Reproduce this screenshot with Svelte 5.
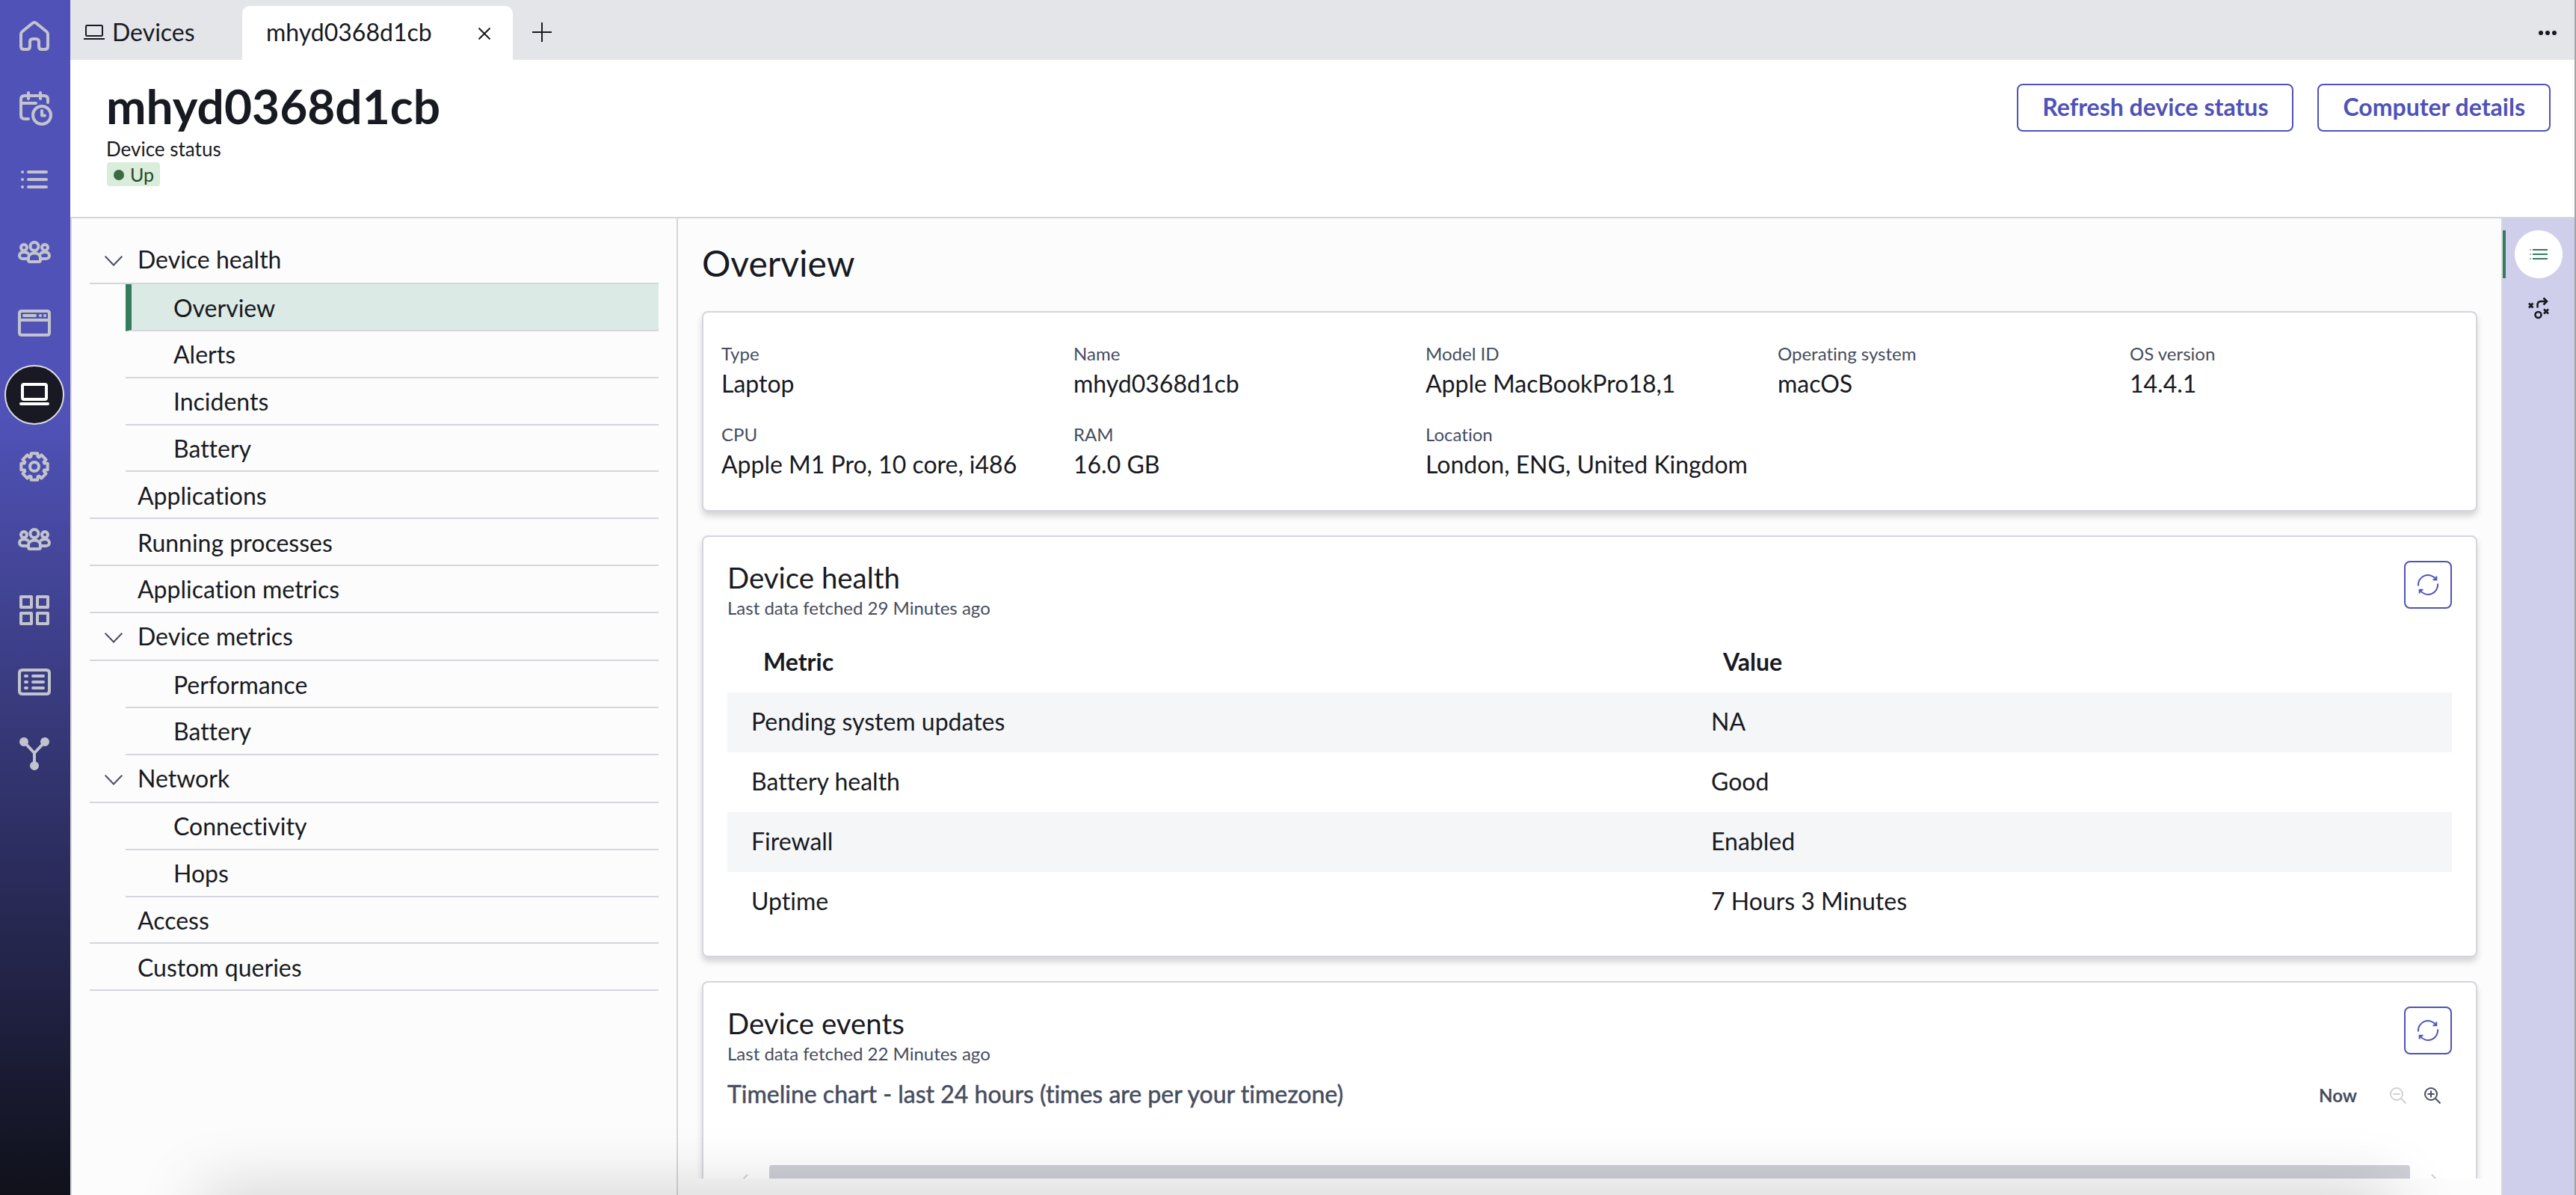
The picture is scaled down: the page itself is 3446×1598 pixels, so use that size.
<script lang="ts">
    type NavItem = { label: string; children?: string[] };

    let activeTool = $state("devices");
    let activeSection = $state("Overview");

    // Outline of the eight-toothed gear, centred on 22,24
    const gearPath =
        Array.from({ length: 8 }, (_, i) => {
            const a = (i * Math.PI) / 4 - Math.PI / 2;
            return [
                [14, -0.33],
                [18.2, -0.24],
                [18.2, 0.24],
                [14, 0.33],
            ].map(([r, d]) => `${(22 + r * Math.cos(a + d)).toFixed(2)} ${(24 + r * Math.sin(a + d)).toFixed(2)}`);
        })
            .flat()
            .map((p, i) => (i ? "L" : "M") + p)
            .join("") + "Z";

    const peoplePath =
        "M27.5 17.5a5.5 5.5 0 1 1-11 0a5.5 5.5 0 1 1 11 0Z" +
        "M14 36V33.500C14 29 17.500 26.500 22 26.500S30 29 30 33.500V36Q30 38 28 38H16Q14 38 14 36Z" +
        "M12 19a4 4 0 1 1-8 0a4 4 0 1 1 8 0Z M40 19a4 4 0 1 1-8 0a4 4 0 1 1 8 0Z" +
        "M12 34H7C3.500 34 2 32 2 30C2 27 4.500 25 8 25C10 25 11.500 25.500 13 26.500" +
        "M32 34H37C40.500 34 42 32 42 30C42 27 39.500 25 36 25C34 25 32.500 25.500 31 26.500";

    const tools = [
        {
            id: "home",
            path: "M4 22V38Q4 42 8 42H12Q16 42 16 38V32Q16 28 20 28H24Q28 28 28 32V38Q28 42 32 42H36Q40 42 40 38V22Q40 19.500 38 18L24.500 7Q22 5 19.500 7L6 18Q4 19.500 4 22Z",
        },
        {
            id: "schedule",
            path: "M14 4V12M30 4V12M14 39H9Q4 39 4 34V13Q4 8 9 8H35Q40 8 40 13V17M5 18H24M44 34a12 12 0 1 1-24 0a12 12 0 1 1 24 0ZM32 28V34.500H36",
        },
        { id: "list", path: "M6 14h.01M6 24h.01M6 34h.01M14 14H38M14 24H38M14 34H38" },
        { id: "teams", path: peoplePath },
        {
            id: "window",
            path: "M5 8H39Q42 8 42 11V37Q42 40 39 40H5Q2 40 2 37V11Q2 8 5 8ZM3 20H41M8 14H23M30 14h.01M36 14h.01",
        },
        { id: "devices", path: "M8 10H36Q38 10 38 12V28Q38 30 36 30H8Q6 30 6 28V12Q6 10 8 10ZM4 36H40" },
        { id: "settings", path: gearPath + "M28 24a6 6 0 1 1-12 0a6 6 0 1 1 12 0Z" },
        { id: "users", path: peoplePath },
        { id: "apps", path: "M4 6H18V20H4ZM26 6H40V20H26ZM4 28H18V42H4ZM26 28H40V42H26Z" },
        {
            id: "records",
            path: "M6 8H38Q42 8 42 12V36Q42 40 38 40H6Q2 40 2 36V12Q2 8 6 8ZM10 16h2M10 24h2M10 32h2M20 16H34M20 24H34M20 32H34",
        },
        {
            id: "flow",
            path: "M8 8L22 23L36 8M22 23V40M12 8a4 4 0 1 1-8 0a4 4 0 1 1 8 0ZM40 8a4 4 0 1 1-8 0a4 4 0 1 1 8 0ZM26 40a4 4 0 1 1-8 0a4 4 0 1 1 8 0ZM8 8h.01M36 8h.01M22 40h.01",
        },
    ];

    const nav: NavItem[] = [
        { label: "Device health", children: ["Overview", "Alerts", "Incidents", "Battery"] },
        { label: "Applications" },
        { label: "Running processes" },
        { label: "Application metrics" },
        { label: "Device metrics", children: ["Performance", "Battery"] },
        { label: "Network", children: ["Connectivity", "Hops"] },
        { label: "Access" },
        { label: "Custom queries" },
    ];

    const details = [
        { label: "Type", value: "Laptop" },
        { label: "Name", value: "mhyd0368d1cb" },
        { label: "Model ID", value: "Apple MacBookPro18,1" },
        { label: "Operating system", value: "macOS" },
        { label: "OS version", value: "14.4.1" },
        { label: "CPU", value: "Apple M1 Pro, 10 core, i486" },
        { label: "RAM", value: "16.0 GB" },
        { label: "Location", value: "London, ENG, United Kingdom" },
    ];

    const metrics = [
        ["Pending system updates", "NA"],
        ["Battery health", "Good"],
        ["Firewall", "Enabled"],
        ["Uptime", "7 Hours 3 Minutes"],
    ];
</script>

{#snippet refreshButton()}
    <button class="refresh" aria-label="Refresh">
        <svg width="28" height="28" viewBox="0 0 28 28">
            <path d="M1 15.500A13 13 0 0 1 24.500 6.500M25.300 2.500V7.300H20.500" />
            <path d="M27 12.500A13 13 0 0 1 3.500 21.500M2.700 25.500V20.700H7.500" />
        </svg>
    </button>
{/snippet}

<div class="app">
    <aside class="toolbar">
        {#each tools as tool}
            <button
                class="tool"
                class:active={activeTool === tool.id}
                aria-label={tool.id}
                onclick={() => (activeTool = tool.id)}
            >
                <svg width="44" height="48" viewBox="0 0 44 48"><path d={tool.path} /></svg>
            </button>
        {/each}
    </aside>

    <div class="workspace">
        <div class="tabs">
            <div class="tab-home">
                <svg width="28" height="22" viewBox="0 0 28 22">
                    <rect x="3" y="2" width="22" height="14" rx="1.500" />
                    <path d="M0 20H28" />
                </svg>
                <span>Devices</span>
            </div>
            <div class="tab">
                <span>mhyd0368d1cb</span>
                <svg class="close" width="16" height="16" viewBox="0 0 16 16"><path d="M.5 .5L15.500 15.500M15.500 .5L.5 15.500" /></svg>
            </div>
            <svg class="add" width="26" height="26" viewBox="0 0 26 26"><path d="M13 0V26M0 13H26" /></svg>
            <svg class="more" width="24" height="6" viewBox="0 0 24 6">
                <circle cx="3" cy="3" r="3" />
                <circle cx="12" cy="3" r="3" />
                <circle cx="21" cy="3" r="3" />
            </svg>
        </div>

        <header>
            <div>
                <h1>mhyd0368d1cb</h1>
                <div class="status-label">Device status</div>
                <div class="badge"><i></i>Up</div>
            </div>
            <div class="actions">
                <button>Refresh device status</button>
                <button>Computer details</button>
            </div>
        </header>

        <div class="body">
            <nav>
                {#each nav as item}
                    <div class="nav-item" class:parent={item.children}>
                        {#if item.children}
                            <svg width="24" height="14" viewBox="0 0 24 14"><path d="M.7 .7L12 12.500L23.300 .7" /></svg>
                        {/if}
                        <span>{item.label}</span>
                    </div>
                    {#each item.children ?? [] as child}
                        <div class="nav-child" class:selected={child === activeSection}>{child}</div>
                    {/each}
                {/each}
            </nav>

            <main>
                <h2>Overview</h2>

                <section class="card details">
                    {#each details as detail}
                        <div>
                            <div class="label">{detail.label}</div>
                            <div class="value">{detail.value}</div>
                        </div>
                    {/each}
                </section>

                <section class="card health">
                    <div class="card-head">
                        <div>
                            <h3>Device health</h3>
                            <p>Last data fetched 29 Minutes ago</p>
                        </div>
                        {@render refreshButton()}
                    </div>
                    <div class="table">
                        <div class="row head"><span>Metric</span><span>Value</span></div>
                        {#each metrics as [name, value]}
                            <div class="row"><span>{name}</span><span>{value}</span></div>
                        {/each}
                    </div>
                </section>

                <section class="card events">
                    <div class="card-head">
                        <div>
                            <h3>Device events</h3>
                            <p>Last data fetched 22 Minutes ago</p>
                        </div>
                        {@render refreshButton()}
                    </div>
                    <div class="chart-head">
                        <h4>Timeline chart - last 24 hours (times are per your timezone)</h4>
                        <b>Now</b>
                        <svg class="zoom disabled" width="23" height="23" viewBox="0 0 23 23">
                            <circle cx="9" cy="9" r="8" />
                            <path d="M15 15L21.500 21.500M4.500 9H13.500" />
                        </svg>
                        <svg class="zoom" width="23" height="23" viewBox="0 0 23 23">
                            <circle cx="9" cy="9" r="8" />
                            <path d="M15 15L21.500 21.500M4.500 9H13.500M9 4.500V13.500" />
                        </svg>
                    </div>
                    <div class="scroller">
                        <svg width="9" height="16" viewBox="0 0 9 16"><path d="M8 .5L1 8L8 15.500" /></svg>
                        <div class="thumb"></div>
                        <svg width="9" height="16" viewBox="0 0 9 16"><path d="M1 .5L8 8L1 15.500" /></svg>
                    </div>
                </section>
            </main>

            <aside class="rail">
                <button class="rail-item on" aria-label="Details">
                    <svg width="24" height="14" viewBox="0 0 24 14">
                        <path class="dots" d="M0 1H2M0 7H2M0 13H2" />
                        <path d="M4 1H24M4 7H24M4 13H24" />
                    </svg>
                </button>
                <button class="rail-item" aria-label="Playbook">
                    <svg width="32" height="32" viewBox="0 0 32 32">
                        <path d="M3 9.500L8.500 15.500M8.500 9.500L3 15.500M14.500 15.500V12Q14.500 7 19 7H26M22.500 2.500L27 7L22.500 11.500M23 17.500L29 23.500M29 17.500L23 23.500" />
                        <circle cx="15.500" cy="25" r="4" />
                    </svg>
                </button>
            </aside>
        </div>
    </div>
    <div class="dock-shadow"></div>
</div>

<style>
    :global(body) {
        margin: 0;
        overflow: hidden;
    }

    .app {
        --text: #181a22;
        --muted: #464d5e;
        --line: #d5d6dc;
        --brand: #4f52b8;
        --green: #347c5d;
        position: relative;
        display: flex;
        box-sizing: border-box;
        width: 3446px;
        height: 1598px;
        overflow: hidden;
        border-right: 2px solid #a3a4a6;
        font-family: Lato, sans-serif;
        font-size: 32px;
        font-variant-ligatures: none;
        line-height: 40px;
        color: var(--text);
        background: #fcfcfc;
    }

    button {
        padding: 0;
        border: 0;
        background: none;
        font: inherit;
        color: inherit;
    }

    svg {
        flex: none;
        fill: none;
        stroke: currentColor;
        stroke-width: 2;
    }

    h1, h2, h3, h4, p {
        margin: 0;
        font-weight: 400;
    }

    /* left toolbar */
    .toolbar {
        display: flex;
        flex-direction: column;
        align-items: center;
        gap: 16px;
        box-sizing: border-box;
        width: 94px;
        padding: 8px 2px 0 0;
        background: linear-gradient(#5052b7 0, #5052b7 35%, #10111a 100%);
        color: #c2c4cd;
    }

    .tool {
        display: flex;
        align-items: center;
        justify-content: center;
        flex: none;
        box-sizing: border-box;
        width: 80px;
        height: 80px;
        border-radius: 50%;
    }

    .tool.active {
        border: 2px solid #dcdde2;
        background: #181923;
        color: #fff;
    }

    .tool svg {
        overflow: visible;
        stroke-width: 4;
        stroke-linecap: round;
        stroke-linejoin: round;
    }

    .workspace {
        flex: 1;
        display: flex;
        flex-direction: column;
        min-width: 0;
    }

    /* tabs */
    .tabs {
        display: flex;
        align-items: flex-start;
        box-sizing: border-box;
        height: 80px;
        padding: 8px 24px 0 18px;
        background: #e4e5e9;
    }

    .tab-home {
        display: flex;
        align-items: center;
        gap: 10px;
        width: 212px;
        height: 70px;
    }

    .tab {
        display: flex;
        align-items: center;
        justify-content: space-between;
        box-sizing: border-box;
        width: 362px;
        height: 72px;
        padding: 0 30px 2px 32px;
        border-radius: 10px 10px 0 0;
        background: #fff;
    }

    .close {
        margin-top: 4px;
    }

    .add {
        margin: 22px 0 0 26px;
    }

    .more {
        margin: 33px 0 0 auto;
        fill: currentColor;
        stroke: none;
    }

    /* page header */
    header {
        display: flex;
        justify-content: space-between;
        box-sizing: border-box;
        height: 212px;
        padding: 25px 32px 0 48px;
        border-bottom: 2px solid var(--line);
        background: #fff;
    }

    h1 {
        font-size: 64px;
        line-height: 74px;
        font-weight: 700;
    }

    .status-label {
        margin-top: 4px;
        font-size: 26px;
        line-height: 32px;
    }

    .badge {
        display: flex;
        align-items: center;
        gap: 8px;
        box-sizing: border-box;
        width: 71px;
        height: 32px;
        margin: 2px 0 0 1px;
        padding-left: 9px;
        border-radius: 4px;
        background: #daecda;
        color: #24492a;
        font-size: 25px;
        line-height: 30px;
    }

    .badge i {
        width: 14px;
        height: 14px;
        margin-top: 1px;
        border-radius: 50%;
        background: #3d6b40;
    }

    .actions {
        display: flex;
        gap: 32px;
        padding-top: 7px;
    }

    .actions button {
        height: 64px;
        padding: 0 32px 2px;
        border: 2px solid var(--brand);
        border-radius: 8px;
        color: var(--brand);
        font-weight: 700;
    }

    .body {
        flex: 1;
        display: flex;
        min-height: 0;
    }

    /* section navigation */
    nav {
        box-sizing: border-box;
        width: 813px;
        padding: 24px 24px 0;
        border: solid var(--line);
        border-width: 0 2px;
    }

    .nav-item,
    .nav-child {
        display: flex;
        align-items: center;
        box-sizing: border-box;
        height: 62.8px;
        padding-top: 2px;
        border-bottom: 2px solid var(--line);
    }

    .nav-item {
        padding-left: 64px;
    }

    .nav-item.parent {
        gap: 20px;
        height: 64.3px;
        padding-top: 0;
        padding-left: 20px;
    }

    .nav-child {
        margin-left: 48px;
        padding-left: 64px;
    }

    .nav-child.selected {
        border-left: 8px solid var(--green);
        padding-left: 56px;
        background: #dbeae4;
    }

    .nav-item svg {
        margin-top: 4px;
        color: #4a4f5e;
    }

    /* content */
    main {
        flex: 1;
        height: 1284px;
        overflow: hidden;
        padding: 0 32px;
    }

    h2 {
        padding: 30px 0 34px;
        font-size: 48px;
        line-height: 60px;
    }

    .card {
        box-sizing: border-box;
        margin-bottom: 32px;
        border: 2px solid var(--line);
        border-radius: 8px;
        background: #fff;
        box-shadow: 0 6px 8px rgba(0, 0, 0, 0.16);
    }

    .details {
        display: grid;
        grid-template-columns: repeat(5, 471px);
        grid-auto-rows: 108px;
        height: 268px;
        padding: 39px 24px 0;
    }

    .label {
        color: var(--muted);
        font-size: 24px;
        line-height: 32px;
    }

    .value {
        margin-top: 4px;
        white-space: nowrap;
    }

    .health,
    .events {
        height: 564px;
        padding: 32px 32px 0;
    }

    .card-head {
        display: flex;
        justify-content: space-between;
        height: 96px;
    }

    h3 {
        font-size: 38.4px;
        line-height: 45px;
    }

    p {
        margin-top: 2px;
        color: var(--muted);
        font-size: 24px;
        line-height: 32px;
    }

    .refresh {
        display: flex;
        align-items: center;
        justify-content: center;
        box-sizing: border-box;
        width: 64px;
        height: 64px;
        border: 2px solid var(--brand);
        border-radius: 8px;
        color: var(--brand);
    }

    .row {
        display: grid;
        grid-template-columns: 1284px 1fr;
        align-items: center;
        box-sizing: border-box;
        height: 80px;
        padding: 0 0 2px 32px;
    }

    .row:nth-child(even) {
        background: #f5f6f8;
    }

    .row.head {
        padding-left: 48px;
        font-weight: 700;
    }

    .chart-head {
        display: flex;
        align-items: center;
        height: 44px;
        color: var(--muted);
    }

    h4 {
        flex: 1;
        margin-bottom: 2px;
        font-size: 32px;
        -webkit-text-stroke: 0.5px currentColor;
    }

    .chart-head b {
        margin: 2px 44px 0 0;
        font-size: 24px;
    }

    .zoom {
        margin: 2px 14px 0 0;
    }

    .zoom.disabled {
        margin-right: 23px;
        color: #cfd0d6;
    }

    .scroller {
        display: flex;
        gap: 28px;
        margin-top: 72px;
        padding: 0 19px;
        color: #cfd0d6;
    }

    .scroller svg {
        margin-top: 12px;
    }

    .thumb {
        flex: 1;
        height: 32px;
        border-radius: 4px;
        background: #cfd0d7;
    }

    /* right rail */
    .rail {
        display: flex;
        flex-direction: column;
        gap: 8px;
        box-sizing: border-box;
        width: 98px;
        padding-top: 16px;
        border-left: 2px solid var(--line);
        background: #cfcfeb;
    }

    .rail-item {
        display: flex;
        align-items: center;
        justify-content: center;
        height: 64px;
    }

    .rail-item.on {
        border-left: 4px solid var(--green);
        padding-right: 4px;
        color: var(--green);
        background: radial-gradient(circle, #fff 31.5px, transparent 32.5px) no-repeat content-box;
        background-origin: content-box;
    }

    .rail-item:not(.on) svg {
        stroke-width: 2.6;
    }

    .dots {
        opacity: 0.5;
    }

    .dock-shadow {
        position: absolute;
        left: 270px;
        top: 1598px;
        width: 2930px;
        height: 60px;
        box-shadow: 0 0 90px rgba(0, 0, 0, 0.22);
        pointer-events: none;
    }
</style>
